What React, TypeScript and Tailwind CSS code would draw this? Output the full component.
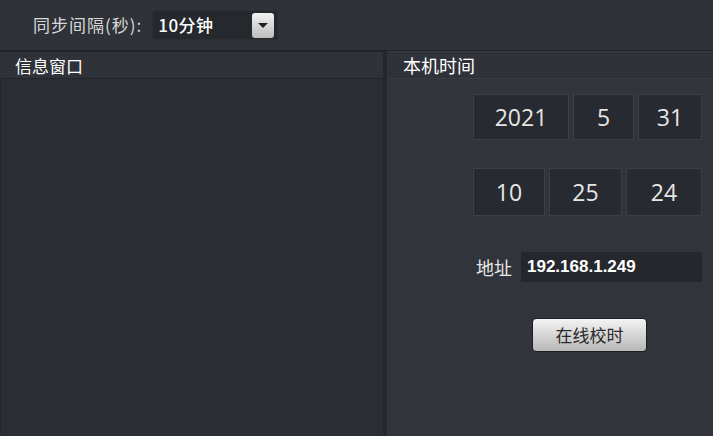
import { useState } from 'react';

const cjk = "font-['Noto_Sans_CJK_SC','Noto_Sans',sans-serif]";

const TimeBox = ({ value, w }: { value: string; w: string }) => (
  <div
    className={`${w} flex items-center justify-center bg-[#272a30] border border-[#3b4048] text-[23px] text-[#e6e6e6] font-['Open_Sans',sans-serif]`}
  >
    {value}
  </div>
);

export default function App() {
  const [addr, setAddr] = useState('192.168.1.249');

  return (
    <div className={`w-[713px] h-[436px] bg-[#30333a] flex flex-col overflow-hidden ${cjk}`}>
      {/* top toolbar */}
      <div className="h-[51px] shrink-0 flex items-center pl-[33px] bg-[#2f3238] border-b border-[#1f2226]">
        <span className="text-[17px] text-[#d8d8d8] mr-[10px] tracking-[1px]">同步间隔(秒):</span>
        <div className="w-[126px] h-[30px] flex items-center justify-between bg-[#25282d] border border-[#2b2e33] pl-[5px] pr-[3px]">
          <span className="text-[17px] text-white font-medium tracking-[0.5px]">10分钟</span>
          <div className="w-[22px] h-[25px] rounded-[3px] bg-gradient-to-b from-[#f2f2f2] to-[#bdbdbd] flex items-center justify-center">
            <div className="w-0 h-0 border-l-[5px] border-r-[5px] border-t-[5px] border-l-transparent border-r-transparent border-t-[#222]" />
          </div>
        </div>
      </div>

      <div className="flex-1 flex min-h-0">
        {/* message window */}
        <div className="w-[383px] shrink-0 flex flex-col">
          <div className="h-[28px] shrink-0 flex items-center pl-[15px] bg-[#2f3238] border-t border-[#383b42] border-b border-[#22252a]">
            <span className="text-[17px] text-white leading-none">信息窗口</span>
          </div>
          <div className="flex-1 bg-[#2a2d32] border-l border-[#24272b]" />
        </div>

        {/* separator */}
        <div className="w-[4px] shrink-0 bg-[#24272c]" />

        {/* local time */}
        <div className="flex-1 flex flex-col">
          <div className="h-[28px] shrink-0 flex items-center pl-[16px] bg-[#2f3238] border-t border-[#383b42] border-b border-[#3a3e46]">
            <span className="text-[18px] text-white leading-none">本机时间</span>
          </div>
          <div className="flex-1 flex flex-col items-end pr-[11px] pt-[15px] bg-[#31343b]">
            <div className="flex gap-[4px] h-[46px]">
              <TimeBox value="2021" w="w-[96px]" />
              <TimeBox value="5" w="w-[61px]" />
              <TimeBox value="31" w="w-[64px]" />
            </div>
            <div className="flex gap-[4px] h-[48px] mt-[28px]">
              <TimeBox value="10" w="w-[72px]" />
              <TimeBox value="25" w="w-[73px]" />
              <TimeBox value="24" w="w-[76px]" />
            </div>
            <div className="flex items-center mt-[36px] w-[226px]">
              <span className="text-[18px] text-[#e8e8e8] w-[45px]">地址</span>
              <input
                value={addr}
                onChange={(e) => setAddr(e.target.value)}
                className="w-[181px] h-[30px] bg-[#24272c] text-[17px] font-semibold text-white px-[6px] outline-none font-['Liberation_Sans',sans-serif]"
              />
            </div>
            <div className="w-[226px] flex justify-start pl-[56px] mt-[36px]">
              <button className="w-[115px] h-[34px] rounded-[4px] border border-[#1c1e22] bg-gradient-to-b from-[#f4f4f4] to-[#b8b8b8] text-[17px] text-[#2a2a2a]">
                在线校时
              </button>
            </div>
          </div>
        </div>
      </div>
    </div>
  );
}
